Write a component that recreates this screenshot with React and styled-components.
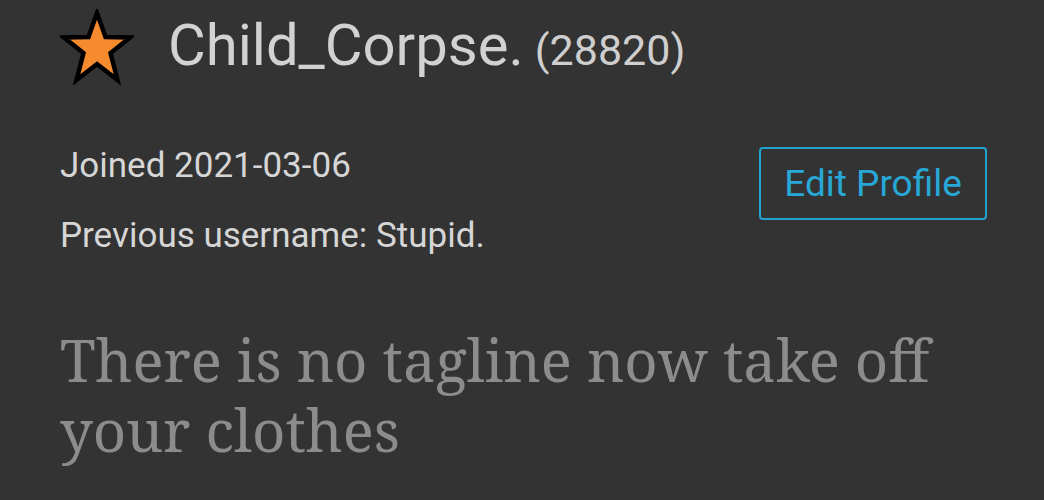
import React from "react";
import styled, { createGlobalStyle } from "styled-components";

const Global = createGlobalStyle`
  html, body { margin: 0; padding: 0; background: #333333; }
  body { width: 1044px; height: 500px; overflow: hidden; }
`;

const Page = styled.div`
  box-sizing: border-box;
  width: 1044px;
  height: 500px;
  padding: 0 57px 0 60px;
  background: #333333;
  font-family: Roboto, "Liberation Sans", sans-serif;
`;

const Header = styled.div`
  display: flex;
  align-items: center;
  height: 94px;
`;

const StarIcon = styled.svg`
  width: 74px;
  height: 76px;
  flex: none;
  margin-right: 34px;
`;

const Title = styled.h1`
  margin: 0;
  font-weight: 400;
  font-size: 58px;
  line-height: 94px;
  color: #d2d2d2;
  white-space: nowrap;
`;

const Count = styled.span`
  margin-left: 11px;
  font-size: 43px;
  color: #cfcfcf;
`;

const InfoRow = styled.div`
  display: flex;
  justify-content: space-between;
  align-items: flex-start;
  margin-top: 51px;
`;

const InfoList = styled.div`
  display: flex;
  flex-direction: column;
  gap: 28px;
`;

const InfoLine = styled.div`
  font-size: 35px;
  line-height: 42px;
  color: #d6d6d6;
`;

const EditButton = styled.button`
  box-sizing: border-box;
  width: 228px;
  height: 73px;
  margin-top: 2px;
  background: transparent;
  border: 2.5px solid #22a3cf;
  border-radius: 4px;
  color: #27a8d6;
  font-family: Roboto, "Liberation Sans", sans-serif;
  font-size: 37px;
  padding: 0;
`;

const Tagline = styled.p`
  margin: 68px 0 0;
  font-family: "Noto Serif", "DejaVu Serif Condensed", "DejaVu Serif", serif;
  font-size: 58px;
  line-height: 70px;
  color: #8c8c8c;
`;

export default function App() {
  return (
    <Page>
      <Global />
      <Header>
        <StarIcon viewBox="0 0 74 76">
          <polygon
            points="37,4 45.5,28 70,28.5 50.5,44 57.5,71 37,55 16.5,71 23.5,44 4,28.5 28.5,28"
            fill="#f58a2e"
            stroke="#000"
            strokeWidth="4.5"
            strokeLinejoin="miter"
          />
        </StarIcon>
        <Title>
          Child_Corpse.<Count>(28820)</Count>
        </Title>
      </Header>
      <InfoRow>
        <InfoList>
          <InfoLine>Joined 2021-03-06</InfoLine>
          <InfoLine>Previous username: Stupid.</InfoLine>
        </InfoList>
        <EditButton>Edit Profile</EditButton>
      </InfoRow>
      <Tagline>There is no tagline now take off your clothes</Tagline>
    </Page>
  );
}
